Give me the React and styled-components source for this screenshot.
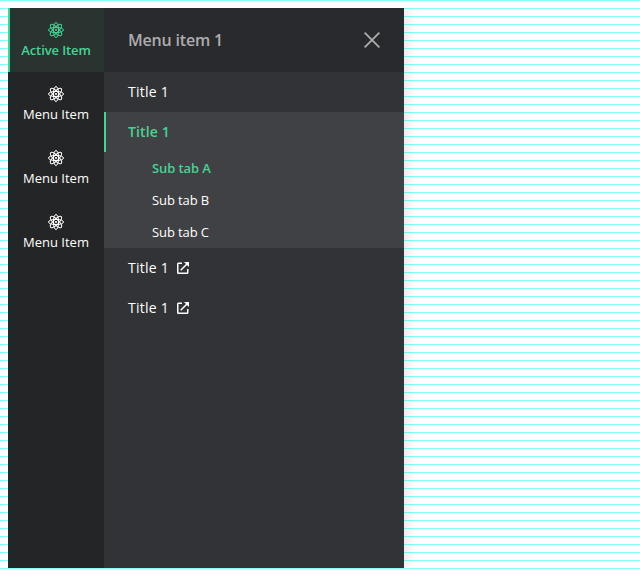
import React from "react";
import styled, { createGlobalStyle, css } from "styled-components";

const GlobalStyle = createGlobalStyle`
  * { box-sizing: border-box; }
  body {
    margin: 0;
    padding: 8px;
    min-height: 576px;
    overflow: hidden;
    font-family: "Open Sans", sans-serif;
    background: repeating-linear-gradient(#80ffff 0 1px, #fff 1px 8px);
  }
`;

const Layout = styled.div`
  display: flex;
  width: 396px;
  height: 560px;
`;

const Rail = styled.nav`
  position: relative;
  z-index: 1;
  width: 96px;
  background: #242526;
`;

const RailItem = styled.a`
  display: flex;
  flex-direction: column;
  align-items: center;
  height: 64px;
  padding-top: 14px;
  font-size: 13px;
  line-height: 20px;
  color: #fff;
  svg { display: block; margin-bottom: 2px; }
  ${({ $active }) => $active && css`
    color: #49d295;
    font-weight: 600;
    letter-spacing: -0.1px;
    background: #29332f;
    box-shadow: inset 2px 0 #49d295;
  `}
`;

const Panel = styled.section`
  width: 300px;
  background: #323336;
  box-shadow: 4px 0 12px rgba(0, 0, 0, 0.1);
  clip-path: inset(0 -20px 0 0);
`;

const PanelHeader = styled.header`
  display: flex;
  align-items: center;
  justify-content: space-between;
  height: 64px;
  padding: 0 24px;
  background: #292a2d;
  color: #adadad;
`;

const Heading = styled.h2`
  margin: 0;
  font-size: 16px;
  line-height: 24px;
  font-weight: 600;
  letter-spacing: -0.18px;
`;

const Tab = styled.a`
  display: flex;
  align-items: center;
  gap: 8px;
  height: 40px;
  padding: 0 24px;
  font-size: 14px;
  line-height: 20px;
  letter-spacing: 0.25px;
  color: #fff;
  ${({ $active }) => $active && css`
    color: #49d295;
    font-weight: 600;
    letter-spacing: 0.15px;
    box-shadow: inset 2px 0 #49d295;
  `}
`;

const TabGroup = styled.div`
  background: #404144;
`;

const SubTab = styled.a`
  display: flex;
  align-items: center;
  height: 32px;
  padding-left: 48px;
  font-size: 13px;
  line-height: 20px;
  letter-spacing: -0.1px;
  color: ${({ $active }) => ($active ? "#49d295" : "#fff")};
  font-weight: ${({ $active }) => ($active ? 600 : 400)};
`;

const AtomIcon = () => (
  <svg width="16" height="16" viewBox="0 0 16 16" fill="none" stroke="currentColor" strokeWidth="1">
    {[0, 45, 90, 135].map((angle) => (
      <ellipse key={angle} cx="8" cy="8" rx="7.5" ry="2.6" transform={`rotate(${angle} 8 8)`} />
    ))}
    <circle cx="8" cy="8" r="1.1" fill="currentColor" stroke="none" />
  </svg>
);

const CloseIcon = () => (
  <svg width="16" height="16" viewBox="0 0 16 16" stroke="currentColor" strokeWidth="1.8">
    <path d="M.6.6l14.8 14.8M15.4.6L.6 15.4" />
  </svg>
);

const ExternalIcon = () => (
  <svg width="12" height="12" viewBox="0 0 12 12" fill="none" stroke="currentColor" strokeWidth="1.5">
    <path d="M5 1.2H1.5Q.75 1.2.75 2v8.5q0 .75.75.75H10q.75 0 .75-.75V7M3.7 8.3L10 2" />
    <path d="M7 0h5v5z" fill="currentColor" stroke="none" />
  </svg>
);

const railItems = ["Active Item", "Menu Item", "Menu Item", "Menu Item"];

export default function App() {
  return (
    <>
      <GlobalStyle />
      <Layout>
        <Rail>
          {railItems.map((label, i) => (
            <RailItem key={i} $active={i === 0}>
              <AtomIcon />
              {label}
            </RailItem>
          ))}
        </Rail>
        <Panel>
          <PanelHeader>
            <Heading>Menu item 1</Heading>
            <CloseIcon />
          </PanelHeader>
          <Tab>Title 1</Tab>
          <TabGroup>
            <Tab $active>Title 1</Tab>
            <SubTab $active>Sub tab A</SubTab>
            <SubTab>Sub tab B</SubTab>
            <SubTab>Sub tab C</SubTab>
          </TabGroup>
          <Tab>Title 1<ExternalIcon /></Tab>
          <Tab>Title 1<ExternalIcon /></Tab>
        </Panel>
      </Layout>
    </>
  );
}
